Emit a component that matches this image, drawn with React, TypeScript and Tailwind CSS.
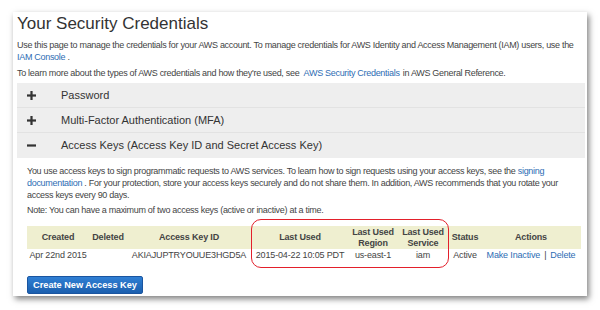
import React from "react";

const font = { fontFamily: '"Liberation Sans", Arial, sans-serif' };

function Plus() {
  return (
    <svg width="9" height="9" viewBox="0 0 9 9" className="block">
      <rect x="0" y="3.4" width="9" height="2.2" fill="#333" />
      <rect x="3.4" y="0" width="2.2" height="9" fill="#333" />
    </svg>
  );
}
function Minus() {
  return (
    <svg width="9" height="9" viewBox="0 0 9 9" className="block">
      <rect x="0" y="3.4" width="9" height="2.2" fill="#333" />
    </svg>
  );
}

function Row({ icon, label, last }: { icon: React.ReactNode; label: string; last?: boolean }) {
  return (
    <div className={`flex items-center h-[25px] ${last ? "" : "border-b border-[#e2e2e2]"}`}>
      <div className="w-[44px] flex justify-start pl-[10px]">{icon}</div>
      <div className="text-[11px] text-[#333]">{label}</div>
    </div>
  );
}

export default function App() {
  const th = "font-bold text-[#444] text-center leading-[11px] px-0";
  const td = "text-center text-[#444] whitespace-nowrap";
  const body = "text-[9px] tracking-[-0.3px] leading-[12px] text-[#444]";
  return (
    <div className="w-[600px] h-[310px] bg-white overflow-hidden" style={font}>
      <div className="ml-[13px] mt-[12px] w-[574px] h-[284px] bg-white shadow-[2px_3px_6px_rgba(0,0,0,0.5)] pl-[4px] pr-[2px] pt-[2px]">
        <div className="text-[17px] leading-[20px] text-[#333]">Your Security Credentials</div>
        <p className={`mt-[5px] ${body}`}>
          Use this page to manage the credentials for your AWS account. To manage credentials for AWS Identity and Access Management (IAM) users, use the{" "}
          <span className="text-[#2e6db4]">IAM Console</span> .
        </p>
        <p className={`mt-[4px] ${body}`}>
          To learn more about the types of AWS credentials and how they're used, see{" "}
          <span className="text-[#2e6db4] ml-[2px]">AWS Security Credentials</span>{" "}
          <span className="ml-[1px]">in AWS General Reference.</span>
        </p>
        <div className="mt-[4px] bg-[#eeeeee]">
          <Row icon={<Plus />} label="Password" />
          <Row icon={<Plus />} label="Multi-Factor Authentication (MFA)" />
          <Row icon={<Minus />} label="Access Keys (Access Key ID and Secret Access Key)" last />
        </div>
        <div className="pl-[10px] pr-[5px] pt-[7px]">
          <p className={body}>
            You use access keys to sign programmatic requests to AWS services. To learn how to sign requests using your access keys, see the{" "}
            <span className="text-[#2e6db4]">signing documentation</span> . For your protection, store your access keys securely and do not share them. In addition, AWS recommends that you rotate your access keys every 90 days.
          </p>
          <p className={`mt-[3px] ${body}`}>
            Note: You can have a maximum of two access keys (active or inactive) at a time.
          </p>
          <div className="relative mt-[10px] w-[554px]">
            <table className="w-[554px] table-fixed border-collapse text-[9px] tracking-[-0.15px]">
              <colgroup>
                <col className="w-[62px]" />
                <col className="w-[38px]" />
                <col className="w-[124px]" />
                <col className="w-[98px]" />
                <col className="w-[48px]" />
                <col className="w-[52px]" />
                <col className="w-[32px]" />
                <col className="w-[100px]" />
              </colgroup>
              <thead>
                <tr className="bg-[#efefd0] h-[23px]">
                  <th className={th}>Created</th>
                  <th className={th}>Deleted</th>
                  <th className={th}>Access Key ID</th>
                  <th className={th}>Last Used</th>
                  <th className={th}>Last Used<br />Region</th>
                  <th className={th}>Last Used<br />Service</th>
                  <th className={th}>Status</th>
                  <th className={th}>Actions</th>
                </tr>
              </thead>
              <tbody>
                <tr className="h-[13px]">
                  <td className={td}>Apr 22nd 2015</td>
                  <td className={td}></td>
                  <td className={td}>AKIAJUPTRYOUUE3HGD5A</td>
                  <td className={td}>2015-04-22 10:05 PDT</td>
                  <td className={td}>us-east-1</td>
                  <td className={td}>iam</td>
                  <td className={td}>Active</td>
                  <td className={td}>
                    <span className="text-[#2e6db4]">Make Inactive</span>
                    <span className="mx-[4px] text-[#444]">|</span>
                    <span className="text-[#2e6db4]">Delete</span>
                  </td>
                </tr>
              </tbody>
            </table>
            <div className="absolute left-[224px] top-[-7px] w-[198px] h-[49px] border-[1.5px] border-[#e3202b] rounded-[10px] pointer-events-none" />
          </div>
          <button className="mt-[13px] h-[18px] w-[116px] rounded-[2px] bg-gradient-to-b from-[#2f7fd4] to-[#1b5fae] border border-[#1a55a0] text-white font-bold text-[9.2px] leading-[16px]">
            Create New Access Key
          </button>
        </div>
      </div>
    </div>
  );
}
